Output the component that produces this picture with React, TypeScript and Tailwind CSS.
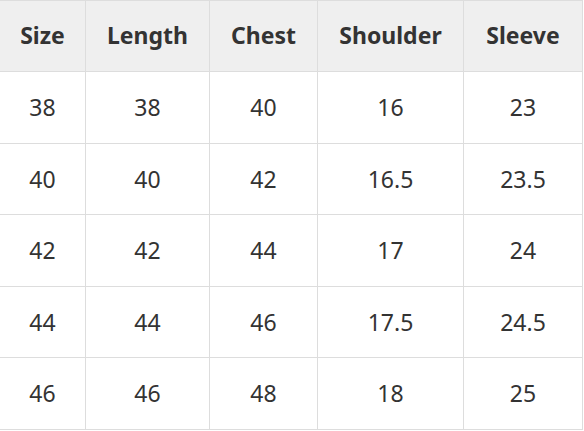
const headers = ["Size", "Length", "Chest", "Shoulder", "Sleeve"];

const rows = [
  ["38", "38", "40", "16", "23"],
  ["40", "40", "42", "16.5", "23.5"],
  ["42", "42", "44", "17", "24"],
  ["44", "44", "46", "17.5", "24.5"],
  ["46", "46", "48", "18", "25"],
];

export default function App() {
  return (
    <div className="w-[584px] h-[431px] overflow-hidden bg-white">
      <table
        className="-ml-px w-[584px] table-fixed border-collapse text-[23px] text-[#333]"
        style={{ fontFamily: '"Noto Sans", "Open Sans", sans-serif' }}
      >
        <colgroup>
          <col className="w-[86px]" />
          <col className="w-[124px]" />
          <col className="w-[108px]" />
          <col className="w-[146px]" />
          <col className="w-[119px]" />
        </colgroup>
        <thead>
          <tr className="h-[71px] bg-[#efefef]">
            {headers.map((h) => (
              <th
                key={h}
                className="border border-[#dddddd] p-0 pb-px text-center font-bold"
              >
                {h}
              </th>
            ))}
          </tr>
        </thead>
        <tbody>
          {rows.map((r, i) => (
            <tr key={i} className="h-[71.6px]">
              {r.map((v, j) => (
                <td
                  key={j}
                  className="border border-[#dddddd] p-0 text-center font-normal"
                >
                  {v}
                </td>
              ))}
            </tr>
          ))}
        </tbody>
      </table>
    </div>
  );
}
